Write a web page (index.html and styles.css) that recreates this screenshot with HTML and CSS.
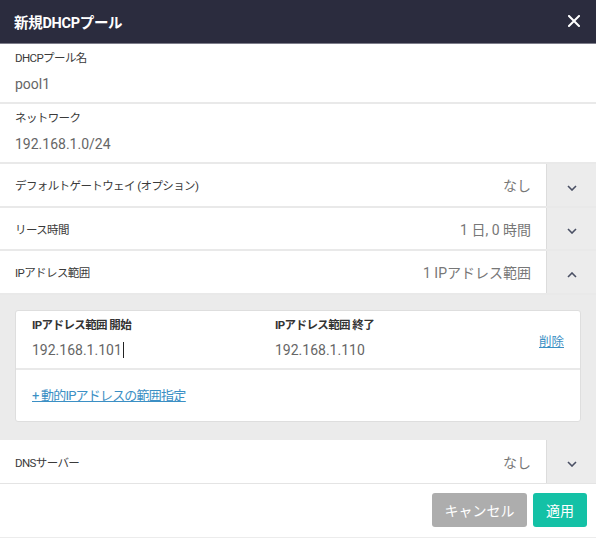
FILE: index.html
```html
<!DOCTYPE html>
<html lang="ja">
<head>
<meta charset="utf-8">
<title>新規DHCPプール</title>
<link rel="stylesheet" href="styles.css">
</head>
<body>
<div class="dialog">
  <div class="header">
    <div class="title">新規DHCPプール</div>
    <svg class="close" width="12" height="12" viewBox="0 0 12 12"><path d="M1 1L11 11M11 1L1 11" stroke="#fff" stroke-width="2" stroke-linecap="square"/></svg>
  </div>

  <div class="field">
    <div class="label">DHCPプール名</div>
    <div class="value">pool1</div>
  </div>
  <div class="field">
    <div class="label">ネットワーク</div>
    <div class="value">192.168.1.0/24</div>
  </div>

  <div class="row">
    <div class="row-main"><span class="row-label">デフォルトゲートウェイ (オプション)</span><span class="row-value">なし</span></div>
    <div class="toggle"><svg width="10" height="6" viewBox="0 0 10 6"><path d="M1 1L5 5L9 1" fill="none" stroke="#4a5064" stroke-width="1.6"/></svg></div>
  </div>
  <div class="row">
    <div class="row-main"><span class="row-label">リース時間</span><span class="row-value">1 日, 0 時間</span></div>
    <div class="toggle"><svg width="10" height="6" viewBox="0 0 10 6"><path d="M1 1L5 5L9 1" fill="none" stroke="#4a5064" stroke-width="1.6"/></svg></div>
  </div>
  <div class="row">
    <div class="row-main"><span class="row-label">IPアドレス範囲</span><span class="row-value">1 IPアドレス範囲</span></div>
    <div class="toggle"><svg width="10" height="6" viewBox="0 0 10 6"><path d="M1 5L5 1L9 5" fill="none" stroke="#4a5064" stroke-width="1.6"/></svg></div>
  </div>

  <div class="panel">
    <div class="card">
      <div class="card-top">
        <div class="col">
          <div class="col-label">IPアドレス範囲 開始</div>
          <div class="col-value">192.168.1.101<span class="caret"></span></div>
        </div>
        <div class="col">
          <div class="col-label">IPアドレス範囲 終了</div>
          <div class="col-value">192.168.1.110</div>
        </div>
        <a class="delete">削除</a>
      </div>
      <div class="card-bottom">
        <a class="add">+ 動的IPアドレスの範囲指定</a>
      </div>
    </div>
  </div>

  <div class="row row-last">
    <div class="row-main"><span class="row-label">DNSサーバー</span><span class="row-value">なし</span></div>
    <div class="toggle"><svg width="10" height="6" viewBox="0 0 10 6"><path d="M1 1L5 5L9 1" fill="none" stroke="#4a5064" stroke-width="1.6"/></svg></div>
  </div>

  <div class="footer">
    <button class="btn btn-cancel">キャンセル</button>
    <button class="btn btn-apply">適用</button>
  </div>
</div>
</body>
</html>
```
FILE: styles.css
```css
* { box-sizing: border-box; }
html, body { margin: 0; padding: 0; background: #fff; }
body { font-family: Roboto, "Noto Sans CJK JP", sans-serif; color: #333; }
.dialog { width: 596px; height: 538px; overflow: hidden; }

.header {
  height: 44px;
  background: #2b2c3e;
  border-bottom: 1px solid #7d7d8a;
  display: flex;
  align-items: center;
  justify-content: space-between;
  padding: 0 16px 0 14px;
}
.title { color: #fff; font-size: 14.5px; font-weight: bold; letter-spacing: -0.3px; }
.close { display: block; margin-top: -1px; }

.field {
  height: 60px;
  border-bottom: 2px solid #e9e9e9;
  padding: 7px 15px 0;
}
.label { font-size: 11.5px; letter-spacing: -0.6px; line-height: 15px; color: #3a3a3a; }
.value { font-size: 14px; line-height: 20px; color: #666; margin-top: 8px; }

.row {
  height: 44px;
  display: flex;
  border-bottom: 2px solid #e9e9e9;
}
.row:nth-of-type(5) { height: 43px; }
.row-main {
  flex: 1;
  display: flex;
  justify-content: space-between;
  align-items: center;
  padding: 0 15px;
}
.row-label { font-size: 11.5px; letter-spacing: -0.6px; color: #3a3a3a; }
.row-value { font-size: 14px; color: #777; }
.toggle {
  width: 50px;
  background: #ececec;
  border-left: 1px solid #dcdcdc;
  display: flex;
  align-items: center;
  justify-content: center;
  padding-top: 5px;
  padding-left: 1px;
}
.toggle svg { display: block; }

.panel {
  background: #ebebeb;
  padding: 15px 15px 18px;
}
.card {
  background: #fff;
  border: 1px solid #dedede;
  border-radius: 3px;
}
.card-top {
  height: 59px;
  display: flex;
  align-items: flex-start;
  padding: 7px 16px 0;
  border-bottom: 2px solid #e9e9e9;
}
.col { width: 243px; }
.col-label { font-size: 11.5px; letter-spacing: -0.6px; font-weight: bold; color: #333; line-height: 15px; }
.col-value { font-size: 14px; color: #666; line-height: 20px; margin-top: 7px; }
.caret { display: inline-block; width: 1px; height: 16px; background: #222; vertical-align: -3px; margin-left: 1px; }
.delete {
  margin-left: auto;
  margin-top: 13px;
  font-size: 12.5px;
  color: #3b8fc4;
  text-decoration: underline;
}
.card-bottom {
  height: 51px;
  padding: 15px 16px 0;
}
.add {
  font-size: 13px;
  letter-spacing: -0.8px;
  color: #3b8fc4;
  text-decoration: underline;
}

.row-last { height: 44px; border-bottom: 1px solid #e4e4e4; }

.footer {
  height: 54px;
  display: flex;
  justify-content: flex-end;
  align-items: flex-start;
  padding: 9px 9px 0 0;
  gap: 6px;
  border-bottom: 1px solid #ececec;
}
.btn {
  height: 34px;
  border: none;
  border-radius: 3px;
  color: #fff;
  font-family: Roboto, "Noto Sans CJK JP", sans-serif;
  font-size: 14px;
  padding: 0;
}
.btn-cancel { width: 95px; background: #adadad; }
.btn-apply { width: 54px; background: #14c1a6; }
```
